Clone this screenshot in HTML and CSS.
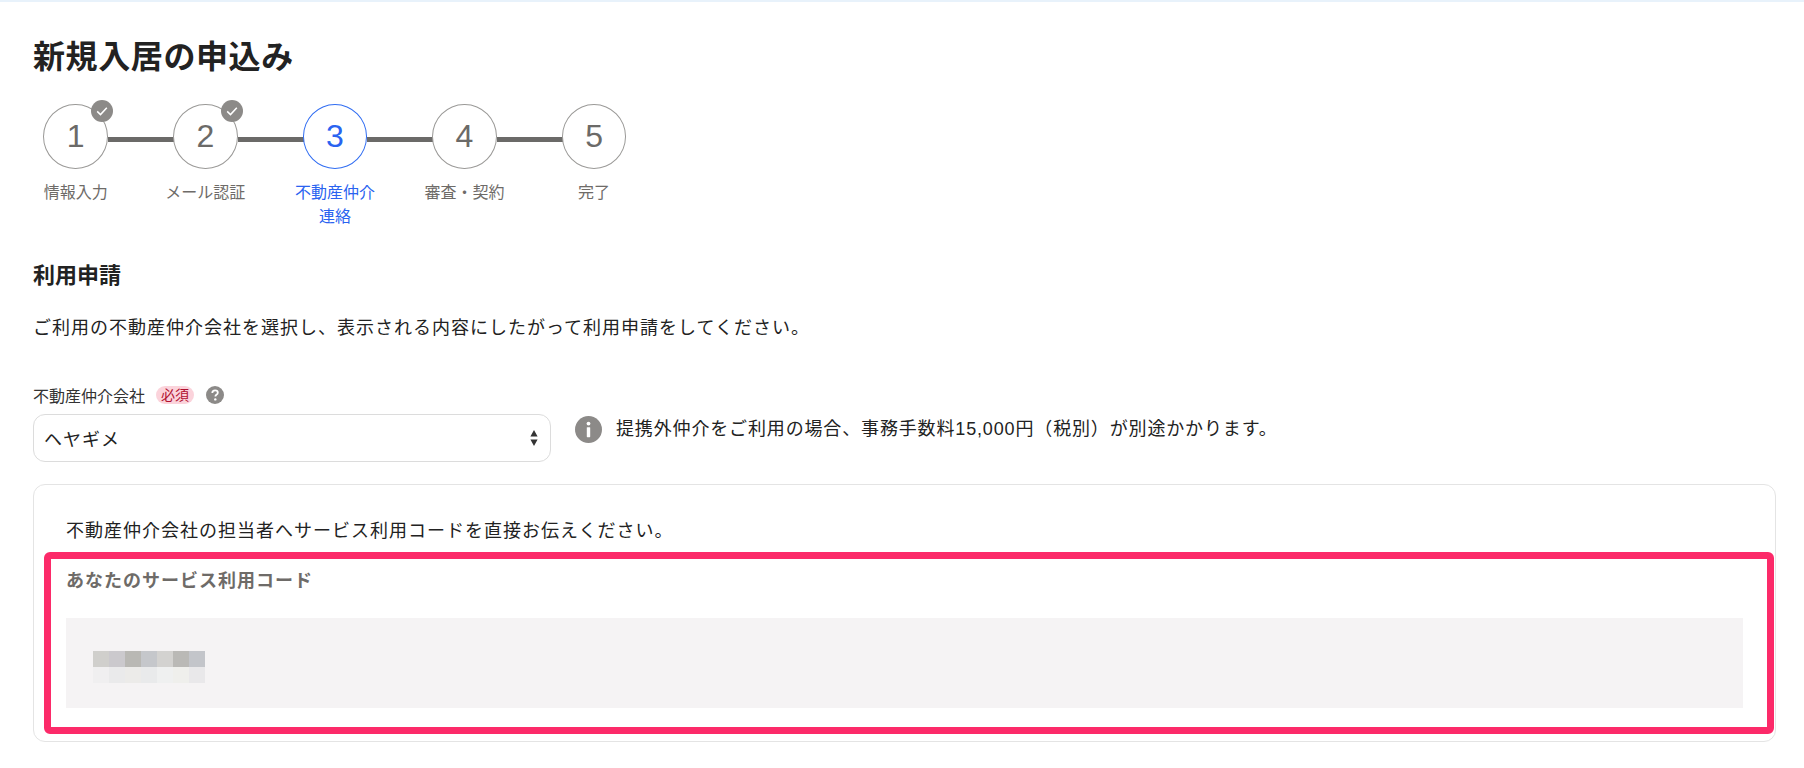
FILE: index.html
```html
<!DOCTYPE html>
<html lang="ja">
<head>
<meta charset="utf-8">
<title>新規入居の申込み</title>
<link rel="stylesheet" href="styles.css">
</head>
<body>
<div class="topbar"></div>
<main class="page">
  <h1 class="title">新規入居の申込み</h1>
  <ol class="steps">
    <li class="step done"><div class="circle">1<span class="tick"><svg viewBox="0 0 22 22"><path d="M6.2 11.4l3.3 3.2 6.3-6.9" fill="none" stroke="#fff" stroke-width="1.5"/></svg></span></div><div class="step-label">情報入力</div></li>
    <li class="step done"><div class="circle">2<span class="tick"><svg viewBox="0 0 22 22"><path d="M6.2 11.4l3.3 3.2 6.3-6.9" fill="none" stroke="#fff" stroke-width="1.5"/></svg></span></div><div class="step-label">メール認証</div></li>
    <li class="step current"><div class="circle">3</div><div class="step-label">不動産仲介連絡</div></li>
    <li class="step"><div class="circle">4</div><div class="step-label">審査・契約</div></li>
    <li class="step"><div class="circle">5</div><div class="step-label">完了</div></li>
  </ol>

  <h2 class="section-title">利用申請</h2>
  <p class="lead">ご利用の不動産仲介会社を選択し、表示される内容にしたがって利用申請をしてください。</p>

  <div class="field-label">
    <span>不動産仲介会社</span>
    <span class="required">必須</span>
    <svg class="help" viewBox="0 0 18 18"><circle cx="9" cy="9" r="9" fill="#8c8a88"/><path d="M6.3 7c0-1.7 1.2-2.6 2.8-2.6s2.7.9 2.7 2.3c0 1-.6 1.6-1.4 2.1-.7.5-1 .8-1 1.6" fill="none" stroke="#fff" stroke-width="1.8"/><circle cx="9.3" cy="13.4" r="1.2" fill="#fff"/></svg>
  </div>
  <div class="field-row">
    <div class="select">
      <span>ヘヤギメ</span>
      <svg class="updown" viewBox="0 0 8 16"><path d="M4 0l3.6 6.4H.4zM4 16L.4 9.6h7.2z" fill="#333"/></svg>
    </div>
    <div class="note">
      <svg class="info" viewBox="0 0 27 27"><circle cx="13.5" cy="13.5" r="13.5" fill="#8c8a88"/><circle cx="13.5" cy="7.6" r="1.9" fill="#fff"/><rect x="11.8" y="11.2" width="3.4" height="10" rx=".6" fill="#fff"/></svg>
      <span>提携外仲介をご利用の場合、事務手数料15,000円（税別）が別途かかります。</span>
    </div>
  </div>

  <section class="card">
    <p class="card-text">不動産仲介会社の担当者へサービス利用コードを直接お伝えください。</p>
    <h3 class="code-title">あなたのサービス利用コード</h3>
    <div class="code-box">
      <div class="mosaic"><i></i><i></i><i></i><i></i><i></i><i></i><i></i><i></i><i></i><i></i><i></i><i></i><i></i><i></i></div>
    </div>
    <div class="highlight"></div>
  </section>
</main>
</body>
</html>
```
FILE: styles.css
```css
* { box-sizing: border-box; }
html, body { margin: 0; padding: 0; }
body {
  background: #fff;
  color: #222;
  font-family: "Liberation Sans", "Noto Sans CJK JP", sans-serif;
  height: 768px;
  overflow: hidden;
}
.topbar { height: 2px; background: #e8f2fb; }
.page { padding: 0 28px 0 33px; }
.title {
  margin: 0;
  padding-top: 33px;
  font-size: 32px;
  line-height: 44px;
  letter-spacing: .6px;
  font-weight: 700;
  color: #222;
}
.steps {
  list-style: none;
  margin: 25px 0 0 -22.1px;
  padding: 0;
  display: flex;
}
.step {
  position: relative;
  width: 129.6px;
  display: flex;
  flex-direction: column;
  align-items: center;
  color: #6e6b68;
}
.step:not(:last-child)::after {
  content: "";
  position: absolute;
  top: 33px;
  left: 97px;
  width: 66px;
  height: 5px;
  background: #6b6a68;
}
.circle {
  position: relative;
  z-index: 1;
  width: 64.5px;
  height: 65px;
  border: 1px solid #9a9997;
  border-radius: 50%;
  background: #fff;
  display: flex;
  align-items: center;
  justify-content: center;
  font-size: 32px;
  color: #6b6a68;
}
.tick {
  position: absolute;
  top: -5px;
  right: -6px;
  width: 22px;
  height: 22px;
  border-radius: 50%;
  background: #8c8a88;
}
.tick svg { display: block; width: 22px; height: 22px; }
.step-label {
  margin-top: 12px;
  max-width: 90px;
  font-size: 16px;
  line-height: 24px;
  text-align: center;
}
.current { color: #2a63f0; }
.current .circle { border-color: #2f6cf2; color: #2a63f0; }

.section-title {
  margin: 0;
  padding-top: 32px;
  font-size: 22px;
  line-height: 30px;
  font-weight: 700;
  color: #222;
}
.lead {
  margin: 22px 0 0;
  font-size: 18px;
  line-height: 30px;
  letter-spacing: 1px;
  color: #222;
}
.field-label {
  margin-top: 40px;
  display: flex;
  align-items: center;
  height: 24px;
  font-size: 16px;
  color: #333;
}
.required {
  margin-left: 11px;
  width: 38px;
  height: 18px;
  border-radius: 9px;
  background: #fbd3db;
  color: #b01030;
  font-size: 14px;
  line-height: 18px;
  text-align: center;
}
.help { margin-left: 12px; width: 18px; height: 18px; }
.field-row {
  margin-top: 7px;
  display: flex;
  align-items: flex-start;
}
.select {
  width: 518px;
  height: 48px;
  padding: 0 12px 0 10px;
  border: 1px solid #dcdcdc;
  border-radius: 12px;
  display: flex;
  align-items: center;
  justify-content: space-between;
  font-size: 18px;
  letter-spacing: 1px;
}
.updown { width: 8px; height: 16px; }
.note {
  margin: 2px 0 0 24px;
  display: flex;
  align-items: center;
  gap: 14px;
  font-size: 18px;
  letter-spacing: .85px;
  line-height: 27px;
}
.info { width: 27px; height: 27px; flex: none; }
.card {
  position: relative;
  margin-top: 22px;
  height: 258px;
  padding: 31px 32px 0;
  border: 1px solid #e4e4e4;
  border-radius: 12px;
}
.card-text {
  margin: 0;
  font-size: 18px;
  line-height: 30px;
  letter-spacing: 1px;
}
.code-title {
  margin: 20px 0 0;
  font-size: 18px;
  line-height: 30px;
  letter-spacing: 1px;
  font-weight: 700;
  color: #6e6b68;
}
.code-box {
  margin-top: 22px;
  height: 90px;
  padding: 33px 27px;
  background: #f5f3f4;
}
.mosaic {
  display: grid;
  grid-template-columns: repeat(7, 16px);
  grid-auto-rows: 16px;
}
.mosaic i { display: block; }
.mosaic i:nth-child(1) { background: #d0cfcc; }
.mosaic i:nth-child(2) { background: #cbc9cd; }
.mosaic i:nth-child(3) { background: #b9b8b4; }
.mosaic i:nth-child(4) { background: #c5c7cb; }
.mosaic i:nth-child(5) { background: #d3d2d0; }
.mosaic i:nth-child(6) { background: #bab9b6; }
.mosaic i:nth-child(7) { background: #c3c5ca; }
.mosaic i:nth-child(8) { background: #f0eff0; }
.mosaic i:nth-child(9) { background: #eaeaeb; }
.mosaic i:nth-child(10) { background: #ecebe9; }
.mosaic i:nth-child(11) { background: #e9eaeb; }
.mosaic i:nth-child(12) { background: #eff0f0; }
.mosaic i:nth-child(13) { background: #efefec; }
.mosaic i:nth-child(14) { background: #e9e8ea; }
.highlight {
  position: absolute;
  left: 10px;
  right: 1px;
  top: 67px;
  height: 182px;
  border: 7px solid #fc2a69;
  border-radius: 6px;
}
```
